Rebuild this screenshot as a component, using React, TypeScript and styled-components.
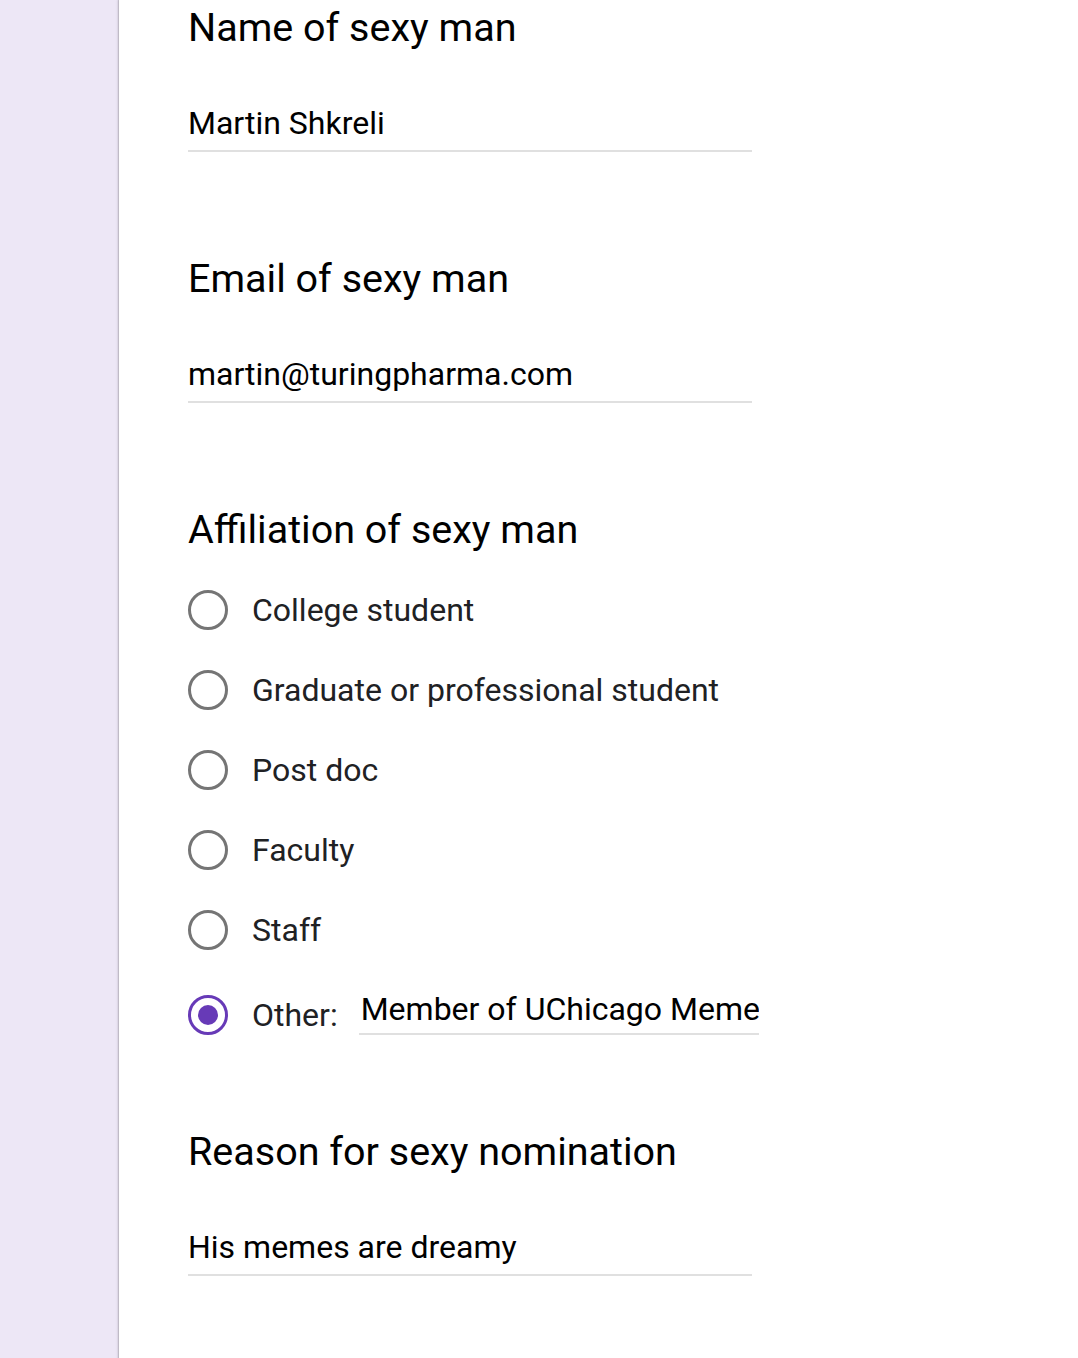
import React from "react";
import styled, { createGlobalStyle } from "styled-components";

const Global = createGlobalStyle`
  html, body { margin: 0; padding: 0; background: #ede7f6; }
  body { font-family: Roboto, "Noto Sans", Arial, sans-serif; }
`;

const Page = styled.div`
  display: flex;
  min-height: 1358px;
  background: #ede7f6;
`;

const Gutter = styled.div`
  width: 119px;
  flex: none;
`;

const Card = styled.main`
  flex: 1;
  background: #fff;
  box-shadow: -1px 0 1px rgba(0,0,0,0.14), -2px 0 2px rgba(0,0,0,0.06);
  padding: 4px 0 0 69px;
  display: flex;
  flex-direction: column;
`;

const Heading = styled.h2`
  margin: 0;
  font-size: 39.5px;
  line-height: 48px;
  font-weight: 400;
  color: #000;
`;

const Field = styled.div`
  width: 564px;
  margin-top: 51px;
  border-bottom: 2px solid #e0e0e0;
  padding-bottom: 7px;
  font-size: 32px;
  line-height: 40px;
  color: #000;
  box-sizing: border-box;
`;

const Question = styled.section<{ $bottom?: number }>`
  display: flex;
  flex-direction: column;
  margin-bottom: ${(p) => p.$bottom ?? 103}px;
`;

const Options = styled.div`
  display: flex;
  flex-direction: column;
  margin-top: 16px;
`;

const OptionRow = styled.label<{ $top?: number }>`
  display: flex;
  align-items: center;
  height: 80px;
  gap: 24px;
  margin-top: ${(p) => p.$top ?? 0}px;
`;

const Radio = styled.span<{ $checked?: boolean }>`
  width: 40px;
  height: 40px;
  box-sizing: border-box;
  border-radius: 50%;
  border: 3.5px solid ${(p) => (p.$checked ? "#673ab7" : "#757575")};
  display: flex;
  align-items: center;
  justify-content: center;
  flex: none;
  &::after {
    content: "";
    display: ${(p) => (p.$checked ? "block" : "none")};
    width: 20px;
    height: 20px;
    border-radius: 50%;
    background: #673ab7;
  }
`;

const OptionText = styled.span`
  font-size: 32px;
  line-height: 40px;
  color: #202124;
  white-space: nowrap;
`;

const OtherField = styled.div`
  flex: none;
  width: 400px;
  align-self: flex-start;
  margin: 14px 0 0 -3px;
  border-bottom: 2px solid #e0e0e0;
  padding: 0 0 4px 2px;
  font-size: 32px;
  line-height: 40px;
  color: #000;
  box-sizing: border-box;
  white-space: nowrap;
  overflow: hidden;
`;

const options = [
  "College student",
  "Graduate or professional student",
  "Post doc",
  "Faculty",
  "Staff",
];

export default function App() {
  return (
    <>
      <Global />
      <Page>
        <Gutter />
        <Card>
          <Question>
            <Heading>Name of sexy man</Heading>
            <Field>Martin Shkreli</Field>
          </Question>
          <Question>
            <Heading>Email of sexy man</Heading>
            <Field>martin@turingpharma.com</Field>
          </Question>
          <Question $bottom={73}>
            <Heading>Affiliation of sexy man</Heading>
            <Options>
              {options.map((o) => (
                <OptionRow key={o}>
                  <Radio />
                  <OptionText>{o}</OptionText>
                </OptionRow>
              ))}
              <OptionRow $top={5}>
                <Radio $checked />
                <OptionText>Other:</OptionText>
                <OtherField>Member of UChicago Meme</OtherField>
              </OptionRow>
            </Options>
          </Question>
          <Question>
            <Heading>Reason for sexy nomination</Heading>
            <Field>His memes are dreamy</Field>
          </Question>
        </Card>
      </Page>
    </>
  );
}
